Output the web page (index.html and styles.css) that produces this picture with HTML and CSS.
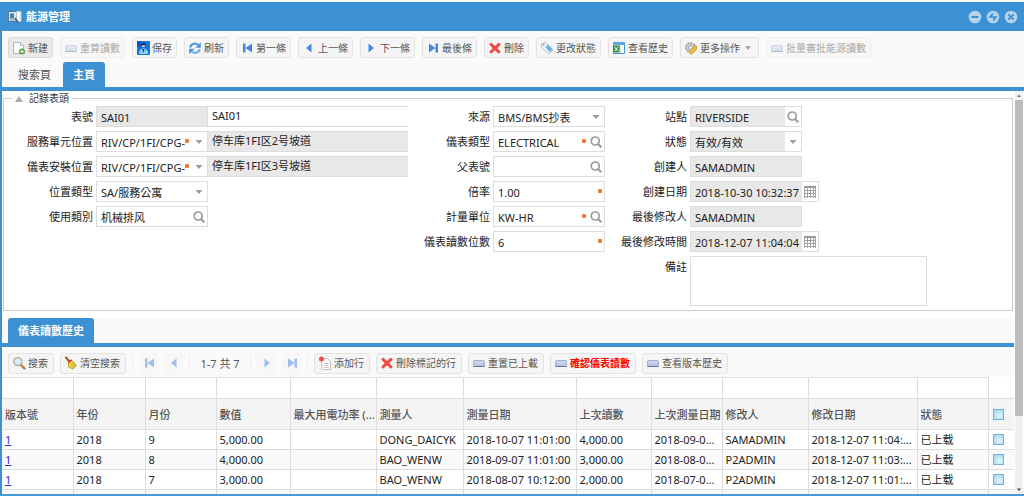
FILE: index.html
```html
<!DOCTYPE html>
<html lang="zh-Hant">

<head>
    <meta charset="UTF-8">
    <meta name="viewport" content="width=device-width, initial-scale=1.0">
    <title>能源管理</title>
    <link rel="stylesheet" href="styles.css">
</head>

<body>
    <!-- Icon definitions -->
    <svg class="defs" width="0" height="0" aria-hidden="true">
        <symbol id="i-new" viewBox="0 0 14 14">
            <path d="M1.5 1.5h7l3 3v8h-10z" fill="#fff" stroke="#a9b8c6" />
            <path d="M8.5 1.5v3h3" fill="#e4ecf3" stroke="#a9b8c6" />
            <circle cx="10" cy="10.5" r="3" fill="#5f9f3c" />
            <path d="M8.2 10.5h3.6M10 8.7v3.6" stroke="#fff" stroke-width="1.2" />
        </symbol>
        <symbol id="i-key" viewBox="0 0 14 14">
            <rect x="1.5" y="4.5" width="11" height="6" rx="1" fill="#b3c1e4" stroke="#a4aed0" />
            <path d="M2.5 6h9" stroke="#e3e9f8" />
            <path d="M3 8h8" stroke="#cdd7f0" />
            <path d="M1.5 10.500h11" stroke="#6674a6" />
        </symbol>
        <symbol id="i-save" viewBox="0 0 14 14">
            <rect x="1" y="0" width="13" height="14" rx="1" fill="#1377e0" />
            <path d="M1 0h4v6H1z" fill="#0b55c4" />
            <circle cx="7.5" cy="4" r="2.3" fill="#0a2d66" />
            <path d="M5.8 4.2h3.4L8.7 6H6.3z" fill="#f2d5b8" />
            <path d="M3 13c0-4 2-5.500 4.500-5.500S12 9 12 13z" fill="#8fd0f7" />
            <path d="M6.300 8l1.200 4 1.200-4z" fill="#0c3f93" />
        </symbol>
        <symbol id="i-refresh" viewBox="0 0 14 14">
            <path d="M2.200 6.500A4.800 4.800 0 0 1 10.300 4" fill="none" stroke="#4c9be0" stroke-width="2.200" />
            <path d="M12.800 1.200v5.600H7.400z" fill="#4a94dc" />
            <path d="M11.800 8A4.800 4.800 0 0 1 3.700 10.500" fill="none" stroke="#6db3ec" stroke-width="2.200" />
            <path d="M1.200 13.200V7.800h5.400z" fill="#4a94dc" />
        </symbol>
        <symbol id="i-first" viewBox="0 0 14 14">
            <path d="M3 2.500h2.500v9H3zM12 2.500v9L5.500 7z" fill="#4486e0" />
        </symbol>
        <symbol id="i-prev" viewBox="0 0 14 14">
            <path d="M9.500 2.500v9L4 7z" fill="#4486e0" />
        </symbol>
        <symbol id="i-next" viewBox="0 0 14 14">
            <path d="M4.500 2.500v9L10 7z" fill="#4486e0" />
        </symbol>
        <symbol id="i-last" viewBox="0 0 14 14">
            <path d="M3 2.500v9L9.500 7zM9.500 2.500H12v9H9.500z" fill="#4486e0" />
        </symbol>
        <symbol id="i-delete" viewBox="0 0 14 14">
            <path d="M3.200 1.500L7 5l3.800-3.500 2 2L9.300 7.200l3.500 3.600-2 2L7 9.300l-3.800 3.500-2-2 3.500-3.600-3.500-3.700z" fill="#ef4a43" />
        </symbol>
        <symbol id="i-tag" viewBox="0 0 14 14">
            <path d="M1.500 2.500l4-1 7.500 7-4 4.500-7.500-6.500z" fill="#eef5fa" stroke="#b8c8d5" />
            <path d="M5.500 6L8 3.800l4.500 4.400-2.800 3.300z" fill="#66b5ea" />
            <circle cx="3.600" cy="3.800" r="1" fill="#8ba0b0" />
        </symbol>
        <symbol id="i-history" viewBox="0 0 14 14">
            <path d="M1.500 1.500h11v11h-11z" fill="#fff" stroke="#4a8fc9" />
            <path d="M1 1h12v3H1z" fill="#5ca5dd" />
            <path d="M8 4v8" stroke="#a8cce8" />
            <path d="M1 4.500h6.500v7H1z" fill="#3c8a46" />
            <path d="M2.500 6l3.500 4M6 6l-3.500 4" stroke="#fff" />
        </symbol>
        <symbol id="i-gear" viewBox="0 0 14 14">
            <circle cx="6.500" cy="6.500" r="4.600" fill="#d2d2d2" stroke="#a6a6a6" stroke-width="2" stroke-dasharray="2 1" />
            <circle cx="6.500" cy="6.500" r="2" fill="#f7f7f7" stroke="#9c9c9c" />
            <path d="M5 11l4.500-4.500 1-2.500 2.500 1.500-.5 3-4.500 4.500H6z" fill="#f2ba3c" stroke="#c9963a" stroke-width=".7" />
        </symbol>
        <symbol id="i-find" viewBox="0 0 14 14">
            <path d="M8.500 8.500l4 4" stroke="#b27b45" stroke-width="2.400" stroke-linecap="round" />
            <circle cx="5.800" cy="5.600" r="4" fill="#d8ecfa" stroke="#c0ab90" stroke-width="1.400" />
        </symbol>
        <symbol id="i-broom" viewBox="0 0 14 14">
            <path d="M2 1.500l3.500 4" stroke="#a3562e" stroke-width="2" stroke-linecap="round" />
            <path d="M4.500 6l3-2 5 5.500-3.500 3.500-4.500-2z" fill="#f1cf45" stroke="#b08e22" stroke-width=".8" />
            <path d="M4.300 6.300l3.400-2.400" stroke="#cf3c2c" stroke-width="1.500" />
            <path d="M7 8l2.500 3.500M9 7l2 3" stroke="#b9962b" stroke-width=".7" />
        </symbol>
        <symbol id="i-addrow" viewBox="0 0 14 14">
            <path d="M3.500 2.500h6l3 3v8h-9z" fill="#fafafa" stroke="#c4c4c4" />
            <path d="M5.500 7.500h5M5.500 9.500h5M5.500 11.500h5" stroke="#c9c9c9" />
            <circle cx="3.500" cy="3" r="2.500" fill="#ee4b45" />
        </symbol>
        <symbol id="i-search" viewBox="0 0 14 14">
            <circle cx="6.200" cy="6" r="4" fill="none" stroke="#9a9a9a" stroke-width="1.700" />
            <path d="M9 9l3.300 3.300" stroke="#9a9a9a" stroke-width="2.200" />
        </symbol>
        <symbol id="i-down" viewBox="0 0 14 14">
            <path d="M3.500 5h7L7 9z" fill="#9c9c9c" />
        </symbol>
        <symbol id="i-calendar" viewBox="0 0 14 14">
            <path d="M1 1h12v2H1z" fill="#999" />
            <path d="M1 5.500h12M1 8.500h12M1 11.500h12M1.500 3v10M4.500 3v10M7.500 3v10M10.500 3v10M12.500 3v10" stroke="#a3a3a3" />
        </symbol>
        <symbol id="i-app" viewBox="0 0 14 14">
            <path d="M.5 1.500h9v10h-9z" fill="#d8e7f1" stroke="#547c99" />
            <path d="M2 3.500h4v5H2z" fill="#4d7f94" />
            <path d="M2 10h6" stroke="#7a9aab" />
            <path d="M8.500 1.500h4.500v10H8.500z" fill="#f5f8fa" stroke="#b4c7d4" />
            <path d="M7 8l3 4.500" stroke="#3f5766" stroke-width="1.500" />
        </symbol>
        <symbol id="i-min" viewBox="0 0 14 14">
            <circle cx="7" cy="7" r="6.300" fill="#b4d4ec" />
            <path d="M3.500 7h7" stroke="#3b91d4" stroke-width="2" />
        </symbol>
        <symbol id="i-restore" viewBox="0 0 14 14">
            <circle cx="7" cy="7" r="6.300" fill="#b4d4ec" />
            <path d="M6.500 3v4.500H3zM7.500 11V6.500H11z" fill="#3b91d4" stroke="#3b91d4" stroke-width=".6" />
        </symbol>
        <symbol id="i-close" viewBox="0 0 14 14">
            <circle cx="7" cy="7" r="6.300" fill="#b4d4ec" />
            <path d="M4.300 4.300l5.400 5.400M9.700 4.300L4.300 9.700" stroke="#3b91d4" stroke-width="1.800" />
        </symbol>
    </svg>

    <div class="window">
        <header class="titlebar">
            <svg class="icon"><use href="#i-app" /></svg>
            <h1>能源管理</h1>
            <div class="window-tools">
                <button aria-label="最小化"><svg class="icon"><use href="#i-min" /></svg></button>
                <button aria-label="還原"><svg class="icon"><use href="#i-restore" /></svg></button>
                <button aria-label="關閉"><svg class="icon"><use href="#i-close" /></svg></button>
            </div>
        </header>

        <div class="toolbar main-toolbar">
            <button class="btn focused"><svg class="icon"><use href="#i-new" /></svg>新建</button>
            <button class="btn" disabled><svg class="icon"><use href="#i-key" /></svg>重算讀數</button>
            <button class="btn"><svg class="icon"><use href="#i-save" /></svg>保存</button>
            <button class="btn"><svg class="icon"><use href="#i-refresh" /></svg>刷新</button>
            <button class="btn"><svg class="icon"><use href="#i-first" /></svg>第一條</button>
            <button class="btn"><svg class="icon"><use href="#i-prev" /></svg>上一條</button>
            <button class="btn"><svg class="icon"><use href="#i-next" /></svg>下一條</button>
            <button class="btn"><svg class="icon"><use href="#i-last" /></svg>最後條</button>
            <button class="btn"><svg class="icon"><use href="#i-delete" /></svg>刪除</button>
            <button class="btn"><svg class="icon"><use href="#i-tag" /></svg>更改狀態</button>
            <button class="btn"><svg class="icon"><use href="#i-history" /></svg>查看歷史</button>
            <button class="btn"><svg class="icon"><use href="#i-gear" /></svg>更多操作<svg class="arrow"><use href="#i-down" /></svg></button>
            <button class="btn" disabled><svg class="icon"><use href="#i-key" /></svg>批量審批能源讀數</button>
        </div>

        <nav class="tabs">
            <button class="tab">搜索頁</button>
            <button class="tab active">主頁</button>
        </nav>

        <div class="body">
            <main class="content">
                <fieldset class="record">
                    <legend><svg class="collapse" viewBox="0 0 8 6"><path d="M0 6h8L4 0z" fill="#aaa" /></svg>記錄表頭</legend>
                    <div class="columns">
                        <div class="column column-wide">
                            <div class="row">
                                <label for="meter">表號</label>
                                <div class="field readonly"><input id="meter" value="SAI01" readonly></div>
                                <div class="desc plain"><input aria-label="表號描述" value="SAI01"></div>
                            </div>
                            <div class="row">
                                <label for="service">服務單元位置</label>
                                <div class="field">
                                    <select id="service"><option>RIV/CP/1FI/CPG-</option></select>
                                    <span class="required"></span>
                                    <span class="trigger"><svg class="icon"><use href="#i-down" /></svg></span>
                                </div>
                                <div class="desc"><input aria-label="服務單元描述" value="停车库1FI区2号坡道" readonly></div>
                            </div>
                            <div class="row">
                                <label for="install">儀表安裝位置</label>
                                <div class="field">
                                    <select id="install"><option>RIV/CP/1FI/CPG-</option></select>
                                    <span class="required"></span>
                                    <span class="trigger"><svg class="icon"><use href="#i-down" /></svg></span>
                                </div>
                                <div class="desc"><input aria-label="安裝位置描述" value="停车库1FI区3号坡道" readonly></div>
                            </div>
                            <div class="row">
                                <label for="loctype">位置類型</label>
                                <div class="field">
                                    <select id="loctype"><option>SA/服務公寓</option></select>
                                    <span class="trigger"><svg class="icon"><use href="#i-down" /></svg></span>
                                </div>
                            </div>
                            <div class="row">
                                <label for="usage">使用類別</label>
                                <div class="field">
                                    <input id="usage" value="机械排风">
                                    <button class="trigger" aria-label="查找"><svg class="icon"><use href="#i-search" /></svg></button>
                                </div>
                            </div>
                        </div>

                        <div class="column">
                            <div class="row">
                                <label for="source">來源</label>
                                <div class="field">
                                    <select id="source"><option>BMS/BMS抄表</option></select>
                                    <span class="trigger"><svg class="icon"><use href="#i-down" /></svg></span>
                                </div>
                            </div>
                            <div class="row">
                                <label for="type">儀表類型</label>
                                <div class="field">
                                    <input id="type" value="ELECTRICAL">
                                    <span class="required"></span>
                                    <button class="trigger" aria-label="查找"><svg class="icon"><use href="#i-search" /></svg></button>
                                </div>
                            </div>
                            <div class="row">
                                <label for="parent">父表號</label>
                                <div class="field">
                                    <input id="parent">
                                    <button class="trigger" aria-label="查找"><svg class="icon"><use href="#i-search" /></svg></button>
                                </div>
                            </div>
                            <div class="row">
                                <label for="rate">倍率</label>
                                <div class="field"><input id="rate" value="1.00"><span class="required"></span></div>
                            </div>
                            <div class="row">
                                <label for="unit">計量單位</label>
                                <div class="field">
                                    <input id="unit" value="KW-HR">
                                    <span class="required"></span>
                                    <button class="trigger" aria-label="查找"><svg class="icon"><use href="#i-search" /></svg></button>
                                </div>
                            </div>
                            <div class="row">
                                <label for="digits">儀表讀數位數</label>
                                <div class="field"><input id="digits" value="6"><span class="required"></span></div>
                            </div>
                        </div>

                        <div class="column">
                            <div class="row">
                                <label for="site">站點</label>
                                <div class="field readonly">
                                    <input id="site" value="RIVERSIDE" readonly>
                                    <button class="trigger" aria-label="查找"><svg class="icon"><use href="#i-search" /></svg></button>
                                </div>
                            </div>
                            <div class="row">
                                <label for="status">狀態</label>
                                <div class="field readonly">
                                    <select id="status"><option>有效/有效</option></select>
                                    <span class="trigger"><svg class="icon"><use href="#i-down" /></svg></span>
                                </div>
                            </div>
                            <div class="row">
                                <label for="creator">創建人</label>
                                <div class="field readonly"><input id="creator" value="SAMADMIN" readonly></div>
                            </div>
                            <div class="row">
                                <label for="created">創建日期</label>
                                <div class="field date readonly">
                                    <input id="created" value="2018-10-30 10:32:37" readonly>
                                    <button class="trigger" aria-label="選擇日期"><svg class="icon"><use href="#i-calendar" /></svg></button>
                                </div>
                            </div>
                            <div class="row">
                                <label for="editor">最後修改人</label>
                                <div class="field readonly"><input id="editor" value="SAMADMIN" readonly></div>
                            </div>
                            <div class="row">
                                <label for="edited">最後修改時間</label>
                                <div class="field date readonly">
                                    <input id="edited" value="2018-12-07 11:04:04" readonly>
                                    <button class="trigger" aria-label="選擇日期"><svg class="icon"><use href="#i-calendar" /></svg></button>
                                </div>
                            </div>
                            <div class="row">
                                <label for="remark">備註</label>
                                <textarea id="remark"></textarea>
                            </div>
                        </div>
                    </div>
                </fieldset>

                <nav class="tabs">
                    <button class="tab active">儀表讀數歷史</button>
                </nav>

                <div class="toolbar">
                    <button class="btn"><svg class="icon"><use href="#i-find" /></svg>搜索</button>
                    <button class="btn"><svg class="icon"><use href="#i-broom" /></svg>清空搜索</button>
                    <span class="separator"></span>
                    <button class="btn page" aria-label="首頁" disabled><svg class="icon"><use href="#i-first" /></svg></button>
                    <button class="btn page" aria-label="上頁" disabled><svg class="icon"><use href="#i-prev" /></svg></button>
                    <span class="separator"></span>
                    <span class="range">1-7 共 7</span>
                    <span class="separator"></span>
                    <button class="btn page" aria-label="下頁" disabled><svg class="icon"><use href="#i-next" /></svg></button>
                    <button class="btn page" aria-label="末頁" disabled><svg class="icon"><use href="#i-last" /></svg></button>
                    <span class="separator"></span>
                    <button class="btn"><svg class="icon"><use href="#i-addrow" /></svg>添加行</button>
                    <button class="btn"><svg class="icon"><use href="#i-delete" /></svg>刪除標記的行</button>
                    <button class="btn"><svg class="icon"><use href="#i-key" /></svg>重置已上載</button>
                    <button class="btn danger"><svg class="icon"><use href="#i-key" /></svg>確認儀表讀數</button>
                    <button class="btn"><svg class="icon"><use href="#i-key" /></svg>查看版本歷史</button>
                </div>

                <table class="grid">
                    <colgroup>
                        <col class="w-71"><col class="w-72"><col class="w-71"><col class="w-74"><col class="w-86">
                        <col class="w-87"><col class="w-113"><col class="w-75"><col class="w-71"><col class="w-86">
                        <col class="w-109"><col class="w-71"><col class="w-check">
                    </colgroup>
                    <thead>
                        <tr class="filters">
                            <td><input aria-label="篩選版本號"></td>
                            <td><input aria-label="篩選年份"></td>
                            <td><input aria-label="篩選月份"></td>
                            <td><input aria-label="篩選數值"></td>
                            <td><input aria-label="篩選最大用電功率"></td>
                            <td><input aria-label="篩選測量人"></td>
                            <td><input aria-label="篩選測量日期"></td>
                            <td><input aria-label="篩選上次讀數"></td>
                            <td><input aria-label="篩選上次測量日期"></td>
                            <td><input aria-label="篩選修改人"></td>
                            <td><input aria-label="篩選修改日期"></td>
                            <td><input aria-label="篩選狀態"></td>
                            <td class="empty"></td>
                        </tr>
                        <tr>
                            <th>版本號</th>
                            <th>年份</th>
                            <th>月份</th>
                            <th>數值</th>
                            <th>最大用電功率 (...</th>
                            <th>測量人</th>
                            <th>測量日期</th>
                            <th>上次讀數</th>
                            <th>上次測量日期</th>
                            <th>修改人</th>
                            <th>修改日期</th>
                            <th>狀態</th>
                            <th class="check"><input type="checkbox" aria-label="全選"></th>
                        </tr>
                    </thead>
                    <tbody>
                        <tr>
                            <td><a href="#">1</a></td>
                            <td>2018</td>
                            <td>9</td>
                            <td>5,000.00</td>
                            <td></td>
                            <td>DONG_DAICYK</td>
                            <td>2018-10-07 11:01:00</td>
                            <td>4,000.00</td>
                            <td>2018-09-0...</td>
                            <td>SAMADMIN</td>
                            <td>2018-12-07 11:04:...</td>
                            <td>已上载</td>
                            <td class="check"><input type="checkbox" aria-label="選擇行"></td>
                        </tr>
                        <tr>
                            <td><a href="#">1</a></td>
                            <td>2018</td>
                            <td>8</td>
                            <td>4,000.00</td>
                            <td></td>
                            <td>BAO_WENW</td>
                            <td>2018-09-07 11:01:00</td>
                            <td>3,000.00</td>
                            <td>2018-08-0...</td>
                            <td>P2ADMIN</td>
                            <td>2018-12-07 11:03:...</td>
                            <td>已上载</td>
                            <td class="check"><input type="checkbox" aria-label="選擇行"></td>
                        </tr>
                        <tr>
                            <td><a href="#">1</a></td>
                            <td>2018</td>
                            <td>7</td>
                            <td>3,000.00</td>
                            <td></td>
                            <td>BAO_WENW</td>
                            <td>2018-08-07 10:12:00</td>
                            <td>2,000.00</td>
                            <td>2018-07-0...</td>
                            <td>P2ADMIN</td>
                            <td>2018-12-07 11:01:...</td>
                            <td>已上载</td>
                            <td class="check"><input type="checkbox" aria-label="選擇行"></td>
                        </tr>
                        <tr>
                            <td></td><td></td><td></td><td></td><td></td><td></td><td></td>
                            <td></td><td></td><td></td><td></td><td></td><td></td>
                        </tr>
                    </tbody>
                </table>
            </main>

            <div class="scrollbar">
                <svg viewBox="0 0 8 8"><path d="M2 5.500h4L4 3z" fill="#777" /></svg>
                <div class="track"><div class="thumb"></div></div>
                <svg viewBox="0 0 8 8"><path d="M2 3h4L4 5.500z" fill="#444" /></svg>
            </div>
        </div>
    </div>
</body>

</html>
```
FILE: styles.css
```css
* {
    box-sizing: border-box
}

body {
    margin: 0;
    background-color: #fff;
    font-family: "Noto Sans", "Noto Sans CJK TC", sans-serif;
    font-size: 11px;
    color: #222
}

button,
input,
select,
textarea {
    font: inherit;
    color: inherit;
    margin: 0;
    padding: 0;
    border: none;
    border-radius: 0;
    background: none;
    outline: none
}

.defs {
    position: absolute
}

.icon {
    width: 14px;
    height: 14px;
    flex: none;
    display: block
}

/* Window frame */
.window {
    display: flex;
    flex-direction: column;
    height: 100vh;
    padding: 2px 0 1px
}

.titlebar {
    display: flex;
    align-items: center;
    flex: none;
    height: 29px;
    padding: 0 6px 0 8px;
    background-color: #3b91d4
}

.titlebar h1 {
    flex: 1;
    margin: 0 0 0 4px;
    font-size: 11px;
    line-height: 16px;
    color: #fff
}

.window-tools {
    display: flex;
    gap: 4px
}

/* Toolbars */
.toolbar {
    display: flex;
    align-items: center;
    flex: none;
    gap: 6px;
    height: 31px;
    padding: 2px 6px 0;
    background-color: #fafafa
}

.main-toolbar {
    gap: 7px
}

.window > .toolbar,
.window > .tabs {
    border-left: 2px solid #3b91d4
}

.btn {
    display: flex;
    align-items: center;
    gap: 2px;
    flex: none;
    height: 21px;
    padding: 0 5px 0 3px;
    border: 1px solid #e3e3e3;
    border-radius: 3px;
    background-color: #f5f5f5;
    font-size: 10px;
    line-height: 18px;
    color: #555;
    white-space: nowrap
}

.btn.focused {
    background-color: #e9e9e9;
    border-color: #dcdcdc
}

.btn:disabled {
    opacity: .5
}

.btn.danger {
    color: #f00;
    font-weight: bold
}

.btn.page {
    width: 19px;
    padding: 0 2px;
    border-color: #f3f3f3
}

.main-toolbar .btn {
    padding-right: 4px
}

.main-toolbar .arrow {
    width: 12px;
    height: 12px
}

.separator {
    width: 1px;
    height: 16px;
    background-color: #eee
}

.range {
    width: 48px;
    text-align: center;
    white-space: nowrap;
    color: #555
}

/* Tabs */
.tabs {
    display: flex;
    flex: none;
    gap: 2px;
    height: 29px;
    padding-left: 6px;
    border-bottom: 4px solid #3b91d4;
    background-color: #fafafa
}

.tab {
    height: 25px;
    padding: 0 10px;
    border-radius: 3px 3px 0 0;
    line-height: 24px;
    color: #555
}

.tab.active {
    background-color: #3b91d4;
    color: #fff;
    font-weight: bold
}

/* Scrolling body */
.body {
    display: flex;
    flex: 1;
    min-height: 0;
    border-left: 2px solid #3b91d4;
    border-bottom: 2px solid #4a9ad8
}

.content {
    flex: 1;
    min-width: 0;
    overflow: hidden
}

.content > .toolbar {
    height: 30px
}

.scrollbar {
    display: flex;
    flex-direction: column;
    width: 8px;
    margin: 0 1px;
    background-color: #f1f1f1
}

.scrollbar svg {
    width: 8px;
    height: 9px
}

.track {
    flex: 1
}

.thumb {
    height: 82%;
    background-color: #bcbcbc
}

/* Record form */
.record {
    margin: 0 1px 7px;
    padding: 0 0 4px;
    border: 1px solid #ccc
}

.record legend {
    display: flex;
    align-items: center;
    margin-left: 8px;
    padding: 0 3px;
    font-size: 10px;
    line-height: 15px;
    color: #333
}

.collapse {
    width: 8px;
    height: 6px;
    margin-right: 6px
}

.columns {
    display: flex
}

.column {
    display: flex;
    flex-direction: column;
    gap: 4px
}

.row {
    display: flex
}

.row label {
    width: 82px;
    margin-right: 3px;
    line-height: 21px;
    text-align: right;
    white-space: nowrap
}

.column-wide {
    width: 404px
}

.column-wide label {
    width: 89px
}

.field {
    display: flex;
    width: 112px;
    height: 21px;
    border: 1px solid #ddd;
    background-color: #fff
}

.field.date {
    width: 129px
}

.field input,
.field select {
    flex: 1;
    min-width: 0;
    width: 0;
    appearance: none;
    padding: 3px 0 0 4px;
    line-height: 16px
}

.readonly input,
.readonly select,
.desc {
    background-color: #e8e8e8
}

.required {
    width: 4px;
    height: 4px;
    margin: 7px 2px 0 0;
    border-radius: 1px;
    background-color: #f47a30
}

.trigger {
    display: flex;
    align-items: center;
    justify-content: center;
    flex: none;
    width: 16px
}

.desc {
    flex: 1;
    height: 21px;
    border: solid #ddd;
    border-width: 1px 0
}

.desc.plain {
    background-color: #fff
}

.desc input {
    width: 100%;
    padding-left: 4px;
    line-height: 18px
}

textarea {
    width: 237px;
    height: 50px;
    border: 1px solid #ddd;
    resize: none
}

/* History grid */
.grid {
    width: 100%;
    table-layout: fixed;
    border-collapse: collapse
}

.grid td,
.grid th {
    height: 20px;
    padding: 0 0 0 3px;
    border: 1px solid #ddd;
    border-width: 1px 1px 0 0;
    line-height: 19px;
    text-align: left;
    white-space: nowrap;
    overflow: hidden;
    text-overflow: ellipsis
}

.grid tbody tr:nth-child(even) {
    background-color: #fafafa
}

.grid .filters td {
    height: 21px;
    padding: 0
}

.filters input {
    display: block;
    width: 100%;
    height: 20px
}

.grid .filters .empty {
    border: none
}

.grid th {
    height: 31px;
    background-color: #f4f4f4;
    font-weight: 500;
    color: #555
}

.grid a {
    color: #2a2ae0
}

.grid .check {
    padding: 0 0 0 4px
}

.check input {
    display: block;
    width: 11px;
    height: 11px;
    appearance: none;
    border: 1px solid #6fb1d8;
    background-image: radial-gradient(circle at 60% 65%, #e4f6fd, #9bd3f0)
}

.w-71 {
    width: 71px
}

.w-72 {
    width: 72px
}

.w-74 {
    width: 74px
}

.w-75 {
    width: 75px
}

.w-86 {
    width: 86px
}

.w-87 {
    width: 87px
}

.w-109 {
    width: 109px
}

.w-113 {
    width: 113px
}

.w-check {
    width: 27px
}
```
